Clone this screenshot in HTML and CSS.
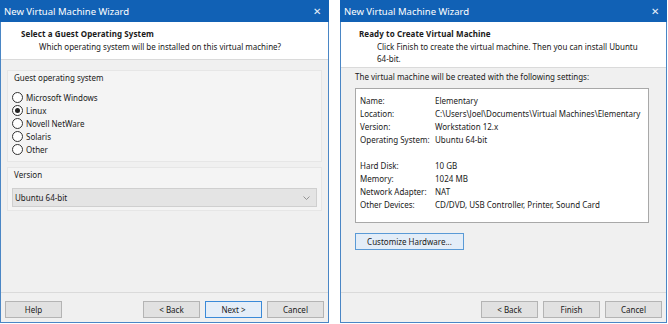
FILE: index.html
```html
<!DOCTYPE html>
<html>
<head>
  <meta charset="utf-8">
  <link rel="stylesheet" href="styles.css">
</head>
<body>
  <div class="screen">
    <div class="window left">
      <div class="titlebar">
        <span class="title">New Virtual Machine Wizard</span>
        <span class="close">&#x2715;</span>
      </div>
      <div class="header">
        <div class="heading">Select a Guest Operating System</div>
        <div class="subheading">Which operating system will be installed on this virtual machine?</div>
      </div>
      <div class="content">
        <div class="group os-group">
          <div class="group-label">Guest operating system</div>
          <div class="radio-list">
            <div class="radio-row"><span class="radio"></span>Microsoft Windows</div>
            <div class="radio-row"><span class="radio checked"></span>Linux</div>
            <div class="radio-row"><span class="radio"></span>Novell NetWare</div>
            <div class="radio-row"><span class="radio"></span>Solaris</div>
            <div class="radio-row"><span class="radio"></span>Other</div>
          </div>
        </div>
        <div class="group version-group">
          <div class="group-label">Version</div>
          <div class="select">
            <span>Ubuntu 64-bit</span>
            <svg class="chevron" width="7" height="4" viewBox="0 0 7 4"><path d="M0.5 0.5 L3.5 3.5 L6.5 0.5" fill="none" stroke="#8a8a8a" stroke-width="0.9"/></svg>
          </div>
        </div>
      </div>
      <div class="footer">
        <button class="btn">Help</button>
        <div class="spacer"></div>
        <button class="btn">&lt; Back</button>
        <button class="btn default">Next &gt;</button>
        <button class="btn">Cancel</button>
      </div>
    </div>

    <div class="window right">
      <div class="titlebar">
        <span class="title">New Virtual Machine Wizard</span>
        <span class="close">&#x2715;</span>
      </div>
      <div class="header tall">
        <div class="heading">Ready to Create Virtual Machine</div>
        <div class="subheading">Click Finish to create the virtual machine. Then you can install Ubuntu<br>64-bit.</div>
      </div>
      <div class="content summary-page">
        <div class="intro">The virtual machine will be created with the following settings:</div>
        <div class="summary">
          <div class="row"><span class="key">Name:</span><span>Elementary</span></div>
          <div class="row"><span class="key">Location:</span><span>C:\Users\Joel\Documents\Virtual Machines\Elementary</span></div>
          <div class="row"><span class="key">Version:</span><span>Workstation 12.x</span></div>
          <div class="row"><span class="key">Operating System:</span><span>Ubuntu 64-bit</span></div>
          <div class="row blank"></div>
          <div class="row"><span class="key">Hard Disk:</span><span>10 GB</span></div>
          <div class="row"><span class="key">Memory:</span><span>1024 MB</span></div>
          <div class="row"><span class="key">Network Adapter:</span><span>NAT</span></div>
          <div class="row"><span class="key">Other Devices:</span><span>CD/DVD, USB Controller, Printer, Sound Card</span></div>
        </div>
        <button class="btn wide focus">Customize Hardware...</button>
      </div>
      <div class="footer">
        <div class="spacer"></div>
        <button class="btn">&lt; Back</button>
        <button class="btn">Finish</button>
        <button class="btn">Cancel</button>
      </div>
    </div>
  </div>
</body>
</html>
```

FILE: styles.css
```css
body {
  margin: 0;
  background: #ffffff;
  font-family: "Noto Sans", "Open Sans", sans-serif;
  font-size: 8px;
  color: #1a1a1a;
}

.screen {
  display: flex;
  gap: 11px;
}

.window {
  height: 323px;
  display: flex;
  flex-direction: column;
  border: 1px solid #4a86c5;
  border-top: none;
  box-sizing: border-box;
  background: #f0f0f0;
}

.window.left {
  width: 329px;
}

.window.right {
  width: 327px;
}

.titlebar {
  height: 22px;
  background: #1161b5;
  color: #ffffff;
  display: flex;
  align-items: center;
  justify-content: space-between;
  padding: 0 8px 0 4px;
  margin: 0 -1px;
  flex-shrink: 0;
}

.title {
  font-size: 9.5px;
}

.close {
  font-size: 10px;
  color: #e8f0fa;
}

.header {
  height: 38px;
  background: #ffffff;
  border-bottom: 1px solid #dadada;
  padding: 6px 0 0 20px;
  box-sizing: border-box;
  flex-shrink: 0;
}

.header.tall {
  height: 46px;
  padding-left: 18px;
}

.heading {
  font-weight: bold;
  line-height: 12px;
  letter-spacing: 0.1px;
}

.subheading {
  padding-left: 18px;
  line-height: 12px;
  margin-top: 1px;
}

.content {
  flex: 1;
  padding: 10px 6px 0 6px;
}

.group {
  background: #f4f4f4;
  border: 1px solid #e6e6e6;
  padding: 2px 4px 0 4px;
  box-sizing: border-box;
}

.group-label {
  line-height: 10px;
  padding-left: 2px;
}

.os-group {
  height: 92px;
}

.radio-list {
  margin-top: 8px;
}

.radio-row {
  display: flex;
  align-items: center;
  gap: 3px;
  height: 13px;
}

.radio {
  width: 9px;
  height: 9px;
  border: 1px solid #333333;
  border-radius: 50%;
  background: #ffffff;
  display: flex;
  align-items: center;
  justify-content: center;
}

.radio.checked::after {
  content: "";
  width: 5px;
  height: 5px;
  border-radius: 50%;
  background: #222222;
}

.version-group {
  margin-top: 5px;
  height: 44px;
}

.select {
  margin-top: 8px;
  height: 17px;
  background: #e4e4e4;
  border: 1px solid #cfcfcf;
  display: flex;
  align-items: center;
  justify-content: space-between;
  padding: 0 6px 0 2px;
}

.footer {
  height: 30px;
  border-top: 1px solid #dadada;
  display: flex;
  align-items: flex-start;
  gap: 5px;
  padding: 8px 4px 0 4px;
  box-sizing: border-box;
  flex-shrink: 0;
}

.spacer {
  flex: 1;
}

.btn {
  width: 57px;
  height: 17px;
  background: #e1e1e1;
  border: 1px solid #b4b4b4;
  font-family: "Noto Sans", sans-serif;
  font-size: 8px;
  color: #1a1a1a;
  padding: 0;
}

.btn.default {
  border-color: #3b8ad8;
  background: #e5eef8;
}

.summary-page {
  padding-top: 4px;
}

.intro {
  padding-left: 8px;
  line-height: 10px;
}

.summary {
  margin: 6px 11px 0 8px;
  height: 128px;
  background: #ffffff;
  border: 1px solid #a8a8a8;
  padding: 5px 0 0 4px;
}

.row {
  display: flex;
  height: 13px;
  align-items: center;
}

.key {
  width: 75px;
}

.btn.wide {
  width: 109px;
  margin: 10px 0 0 8px;
}

.btn.focus {
  border-color: #5a9ad6;
  background: #e3edf8;
}
```
